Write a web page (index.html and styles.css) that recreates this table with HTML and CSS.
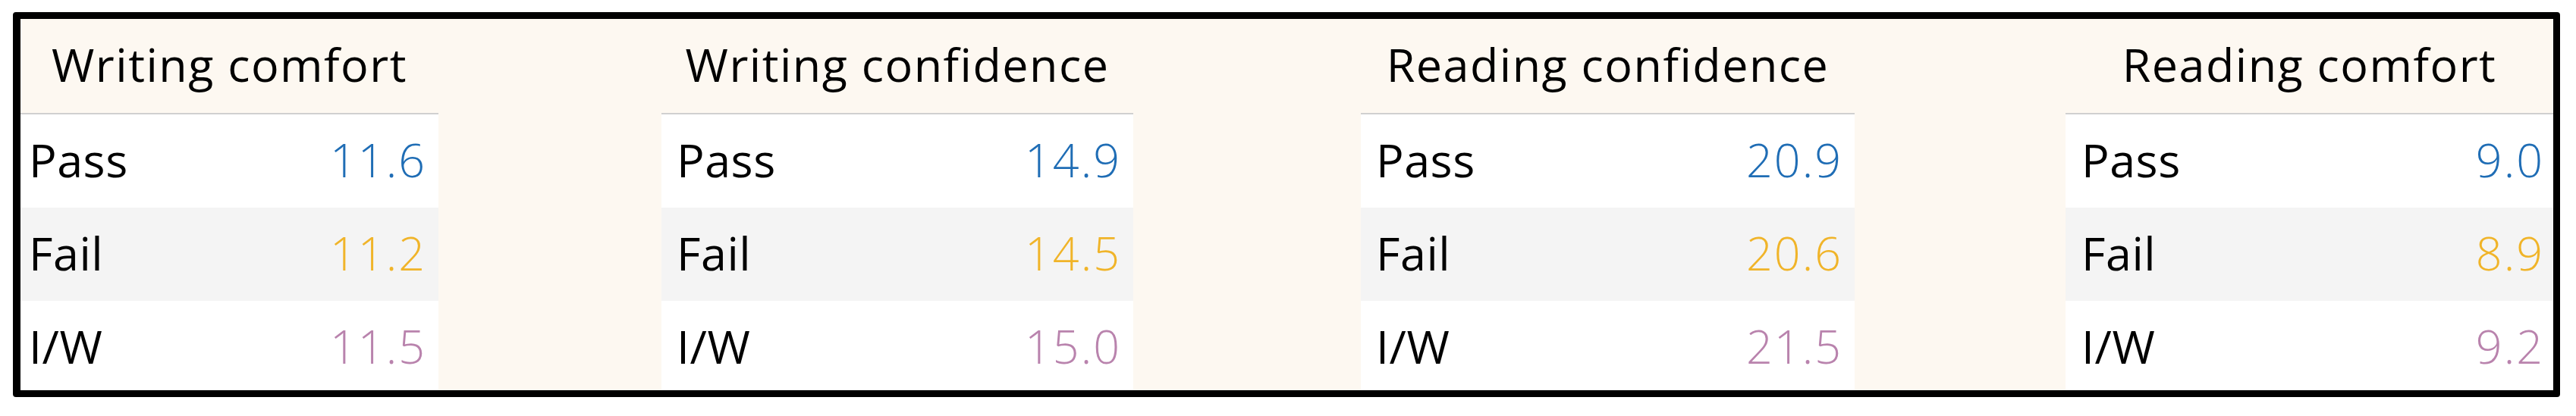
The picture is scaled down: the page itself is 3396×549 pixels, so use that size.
FILE: index.html
```html
<!DOCTYPE html>
<html lang="en">
<head>
<meta charset="utf-8">
<title>Comfort and confidence</title>
<link rel="stylesheet" href="styles.css">
</head>
<body>
<div class="frame">
  <section class="panel panel-1">
    <div class="head">Writing comfort</div>
    <div class="rows">
      <div class="row"><span class="label">Pass</span><span class="val pass">11.6</span></div>
      <div class="row alt"><span class="label">Fail</span><span class="val fail">11.2</span></div>
      <div class="row"><span class="label">I/W</span><span class="val iw">11.5</span></div>
    </div>
  </section>
  <div class="spacer"></div>
  <section class="panel panel-2">
    <div class="head">Writing confidence</div>
    <div class="rows">
      <div class="row"><span class="label">Pass</span><span class="val pass">14.9</span></div>
      <div class="row alt"><span class="label">Fail</span><span class="val fail">14.5</span></div>
      <div class="row"><span class="label">I/W</span><span class="val iw">15.0</span></div>
    </div>
  </section>
  <div class="spacer"></div>
  <section class="panel panel-3">
    <div class="head">Reading confidence</div>
    <div class="rows">
      <div class="row"><span class="label">Pass</span><span class="val pass">20.9</span></div>
      <div class="row alt"><span class="label">Fail</span><span class="val fail">20.6</span></div>
      <div class="row"><span class="label">I/W</span><span class="val iw">21.5</span></div>
    </div>
  </section>
  <div class="spacer"></div>
  <section class="panel panel-4">
    <div class="head">Reading comfort</div>
    <div class="rows">
      <div class="row"><span class="label">Pass</span><span class="val pass">9.0</span></div>
      <div class="row alt"><span class="label">Fail</span><span class="val fail">8.9</span></div>
      <div class="row"><span class="label">I/W</span><span class="val iw">9.2</span></div>
    </div>
  </section>
</div>
</body>
</html>
```

FILE: styles.css
```css
html, body {
  margin: 0;
  padding: 0;
  background: #ffffff;
}

body {
  padding: 16px 0 0 17px;
  font-family: "Open Sans", "Noto Sans", sans-serif;
  color: #000000;
}

.frame {
  box-sizing: border-box;
  width: 3358px;
  height: 508px;
  border-style: solid;
  border-color: #000000;
  border-width: 9px 9px 9px 10px;
  border-radius: 4px;
  background: #fdf8f1;
  display: grid;
  grid-template-columns: 551px 294px 622px 300px 651px 278px 643px;
  overflow: hidden;
}

.panel {
  display: flex;
  flex-direction: column;
  min-width: 0;
}

.head {
  height: 126px;
  box-sizing: border-box;
  line-height: 120px;
  padding-bottom: 6px;
  font-size: 61px;
  font-weight: 500;
  letter-spacing: 1.5px;
  text-align: center;
  white-space: nowrap;
  border-bottom: 2px solid #d0d0d0;
}

.rows {
  background: #ffffff;
  flex: 1;
}

.row {
  height: 123px;
  box-sizing: border-box;
  line-height: 120px;
  padding-bottom: 3px;
  display: flex;
  justify-content: space-between;
  font-size: 61px;
  padding-left: 20px;
  padding-right: 18px;
}

.row.alt {
  background: #f4f4f4;
}

.panel-1 .row { padding-left: 11px; }
.panel-4 .row { padding-left: 21px; padding-right: 14px; }

.label {
  font-weight: 500;
  letter-spacing: 0.5px;
}

.val {
  font-weight: 300;
  letter-spacing: 2px;
  margin-right: -2px;
}

.pass { color: #1f6db5; }
.fail { color: #f0b429; }
.iw { color: #b983ad; }
```
